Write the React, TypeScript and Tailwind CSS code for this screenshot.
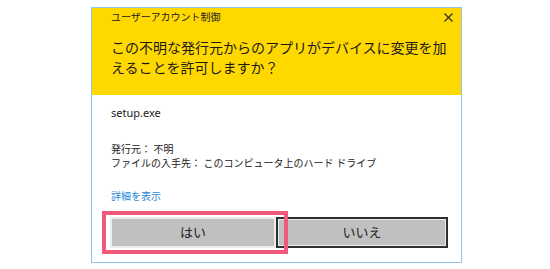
export default function App() {
  return (
    <div
      className="w-[550px] h-[269px] bg-white pt-[7px] pl-[91px]"
      style={{ fontFamily: '"Noto Sans", "Noto Sans CJK JP", sans-serif' }}
    >
      <div className="w-[371px] h-[256px] border border-[#8ec4ee] bg-white flex flex-col">
        <div className="bg-[#ffd800] pt-[2px] pb-[17px]">
          <div className="flex items-center justify-between pl-[19px] pr-[8px] h-[14px]">
            <span className="text-[10px] leading-[14px] text-[#222]">ユーザーアカウント制御</span>
            <svg width="9" height="9" viewBox="0 0 9 9" className="text-[#333]">
              <path d="M0.5 0.5 L8.5 8.5 M8.5 0.5 L0.5 8.5" stroke="currentColor" strokeWidth="1.3" />
            </svg>
          </div>
          <p className="mt-[14px] pl-[19px] w-[362px] text-[14px] leading-[20px] text-[#1a1a1a]">
            この不明な発行元からのアプリがデバイスに変更を加えることを許可しますか？
          </p>
        </div>

        <div className="pl-[19px] pt-[11px] text-[#222]">
          <p className="text-[11px] leading-[14px]">setup.exe</p>
          <div className="mt-[22px] text-[10px] leading-[14px]">
            <p>発行元： 不明</p>
            <p>ファイルの入手先： このコンピュータ上のハード ドライブ</p>
          </div>
          <p className="mt-[19px] text-[10px] leading-[14px] text-[#2a86dc]">詳細を表示</p>
        </div>

        <div className="relative mt-[14px] ml-[18px] flex">
          <button className="w-[166px] h-[31px] border-2 border-[#ececec] bg-[#c0c0c0] text-[13px] text-[#222]">
            はい
          </button>
          <button className="w-[172px] h-[31px] border-2 border-[#2e2e2e] bg-[#c0c0c0] shadow-[inset_0_0_0_1px_#ececec] text-[13px] text-[#222]">
            いいえ
          </button>
          <div className="absolute left-[-8px] top-[-6px] w-[186px] h-[43px] border-4 border-[#ef5a7a]" />
        </div>
      </div>
    </div>
  );
}
